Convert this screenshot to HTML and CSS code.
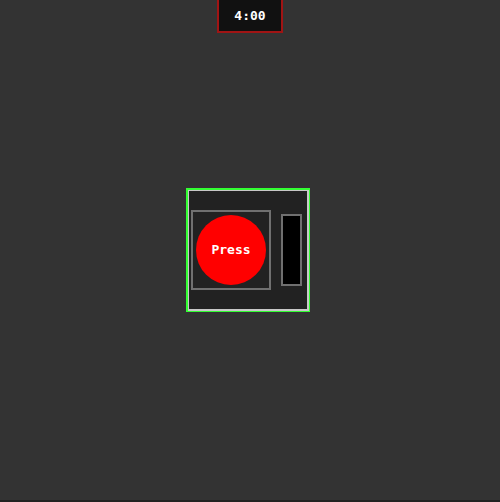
FILE: index.html
```html
<!DOCTYPE html>
<html>
<head>
<meta charset="utf-8">
<link rel="stylesheet" href="styles.css">
</head>
<body>
<div class="stage">
  <div class="timer">4:00</div>
  <div class="game">
    <div class="press-box">
      <div class="press">Press</div>
    </div>
    <div class="meter"></div>
  </div>
</div>
</body>
</html>
```
FILE: styles.css
```css
html {
  background: #222;
}
body {
  margin: 0;
  height: 500px;
  background: #333;
  font-family: "DejaVu Sans Mono", monospace;
}
.stage {
  height: 500px;
  display: grid;
  grid-template: 1fr / 1fr;
}
.timer {
  grid-area: 1 / 1;
  justify-self: center;
  align-self: start;
  background: #111;
  color: #fff;
  font-weight: bold;
  font-size: 13px;
  line-height: 15px;
  padding: 8px 15px 8px;
  border: 2px solid #a01414;
  border-top: none;
}
.game {
  grid-area: 1 / 1;
  justify-self: center;
  align-self: center;
  margin-right: 4px;
  box-sizing: border-box;
  width: 124px;
  height: 124px;
  padding-bottom: 2px;
  border-style: solid;
  border-color: #33ff33;
  border-width: 2px 1px 1px 2px;
  box-shadow: inset 1px 1px 0 #c8c8c8, inset -2px -2px 0 #c8c8c8;
  background: #222;
  display: flex;
  align-items: center;
}
.press-box {
  width: 80px;
  height: 80px;
  box-sizing: border-box;
  border: 2px solid #707070;
  display: flex;
  align-items: center;
  justify-content: center;
  margin-left: 3px;
}
.press {
  width: 70px;
  height: 70px;
  border-radius: 50%;
  background: #ff0000;
  color: #fff;
  font-weight: bold;
  font-size: 13px;
  display: flex;
  align-items: center;
  justify-content: center;
}
.meter {
  margin-left: 10px;
  width: 21px;
  height: 72px;
  box-sizing: border-box;
  border: 2px solid #707070;
  background: #000;
}
```
